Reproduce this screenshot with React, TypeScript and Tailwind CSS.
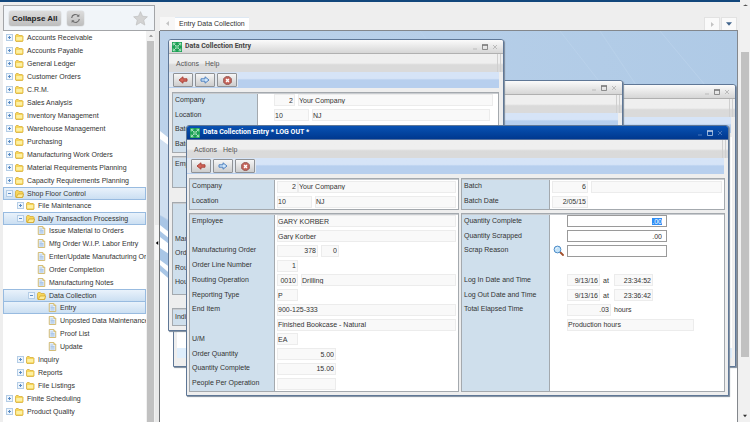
import type React from "react";
import { useEffect, useId, useRef } from "react";
import clsx from "clsx";

type TreeNode = {
  label: string;
  leaf?: boolean;
  selected?: boolean;
  children?: TreeNode[];
};

const MENU: TreeNode[] = [
  { label: "Accounts Receivable" },
  { label: "Accounts Payable" },
  { label: "General Ledger" },
  { label: "Customer Orders" },
  { label: "C.R.M." },
  { label: "Sales Analysis" },
  { label: "Inventory Management" },
  { label: "Warehouse Management" },
  { label: "Purchasing" },
  { label: "Manufacturing Work Orders" },
  { label: "Material Requirements Planning" },
  { label: "Capacity Requirements Planning" },
  {
    label: "Shop Floor Control",
    selected: true,
    children: [
      { label: "File Maintenance" },
      {
        label: "Daily Transaction Processing",
        selected: true,
        children: [
          { label: "Issue Material to Orders", leaf: true },
          { label: "Mfg Order W.I.P. Labor Entry", leaf: true },
          { label: "Enter/Update Manufacturing Orders", leaf: true },
          { label: "Order Completion", leaf: true },
          { label: "Manufacturing Notes", leaf: true },
          {
            label: "Data Collection",
            selected: true,
            children: [
              { label: "Entry", leaf: true, selected: true },
              { label: "Unposted Data Maintenance", leaf: true },
              { label: "Proof List", leaf: true },
              { label: "Update", leaf: true },
            ],
          },
        ],
      },
      { label: "Inquiry" },
      { label: "Reports" },
      { label: "File Listings" },
    ],
  },
  { label: "Finite Scheduling" },
  { label: "Product Quality" },
];

const INDENT = ["pl-[2px]", "pl-[13px]", "pl-[24px]", "pl-[35px]"];

export default function App() {
  return (
    <div className="flex h-screen overflow-hidden bg-[#eeeeee] font-['Liberation_Sans',Arial,sans-serif] text-[7px] leading-[9px] text-[#333]">
      <div className="flex min-w-0 flex-1 flex-col">
        <div className="h-[2px] shrink-0 bg-[#12477c]" />
        <div className="flex min-h-0 flex-1">
          <Sidebar />
          <Splitter />
          <Workspace />
        </div>
      </div>
      <PageScrollbar />
    </div>
  );
}

function Sidebar() {
  return (
    <nav className="flex w-[155px] shrink-0 flex-col pt-[3px] pl-[3px]">
      <div className="flex h-[26px] shrink-0 items-center border border-[#a3a5a8] bg-[#f1f5f9] pr-[6px] pl-[5px]">
        <button className="h-[15px] rounded-[3px] bg-gradient-to-b from-[#dcdcdc] to-[#bdbdbd] px-[3px] text-[8px] leading-[15px] font-bold whitespace-nowrap text-[#222] shadow-[0_0_1px_#888]">
          Collapse All
        </button>
        <button
          aria-label="Refresh"
          className="ml-[6px] flex h-[15px] w-[17px] items-center justify-center rounded-[3px] bg-gradient-to-b from-[#dcdcdc] to-[#bdbdbd] shadow-[0_0_1px_#888]"
        >
          <RefreshIcon />
        </button>
        <button aria-label="Favorites" className="ml-auto">
          <svg viewBox="0 0 24 24" className="size-[15px]">
            <path
              d="M12 1l3.3 7.400 7.700.8-5.800 5.300 1.700 8L12 18.400 5.100 22.500l1.700-8L1 9.200l7.700-.8z"
              fill="#d3d3d3"
              stroke="#bcbcbc"
            />
          </svg>
        </button>
      </div>
      <div className="flex min-h-0 flex-1">
        <div className="min-w-0 flex-1 overflow-hidden bg-white">
          <TreeList nodes={MENU} level={0} />
        </div>
        <div className="flex w-[9px] shrink-0 flex-col items-center bg-[#f1f1f1]">
          <div className="flex h-[10px] items-center">
            <Arrow direction="up" className="w-[4px] text-[#888]" />
          </div>
          <div className="w-[7px] flex-1 bg-[#c1c1c1]" />
        </div>
      </div>
    </nav>
  );
}

function TreeList({ nodes, level }: { nodes: TreeNode[]; level: number }) {
  return (
    <ul className={clsx(level > 0 && "-mt-px")}>
      {nodes.map((node) => (
        <li key={node.label}>
          <div
            className={clsx(
              "flex h-[13px] items-center border whitespace-nowrap",
              INDENT[level],
              node.selected
                ? "border-[#98bbe0] bg-gradient-to-b from-[#e9f2fb] to-[#cbdff2]"
                : "border-transparent",
            )}
          >
            {node.leaf ? (
              <span className="w-[7px] shrink-0" />
            ) : (
              <button aria-label={`Toggle ${node.label}`} className="shrink-0">
                <Expander open={node.children != null} />
              </button>
            )}
            <span className="mr-[3px] ml-[2px] shrink-0">
              {node.leaf ? <PageIcon /> : <FolderIcon open={node.children != null} />}
            </span>
            <a href="#">{node.label}</a>
          </div>
          {node.children && <TreeList nodes={node.children} level={level + 1} />}
        </li>
      ))}
    </ul>
  );
}

function Splitter() {
  return (
    <div className="mt-[29px] flex w-[5px] shrink-0 flex-col border-r border-[#6f7173] bg-[#e9e9e9]">
      <div className="flex-[194]" />
      <div className="flex h-[35px] items-center justify-end bg-[#f6f6f6]">
        <Arrow direction="left" className="w-[4px] text-black" />
      </div>
      <div className="flex-[162]" />
    </div>
  );
}

function Workspace() {
  return (
    <main className="flex min-w-0 flex-1 flex-col pr-[2px]">
      <div className="flex h-[28px] shrink-0 items-end">
        <button
          aria-label="Previous tab"
          className="flex h-[13px] w-[15px] items-center justify-center bg-[#f7f7f7]"
        >
          <Arrow direction="left" className="w-[5px] text-[#c4c4c4]" />
        </button>
        <button className="h-[13px] border-t border-[#dde8f3] bg-white px-[4px] leading-[12px] whitespace-nowrap">
          Entry Data Collection
        </button>
        <div className="mr-[1px] ml-auto flex gap-px">
          <button
            aria-label="Next tab"
            className="flex h-[13px] w-[16px] items-center justify-center border border-b-0 border-[#e2e2e2] bg-[#fafafa]"
          >
            <Arrow direction="right" className="w-[5px] text-[#c4c4c4]" />
          </button>
          <button
            aria-label="Tab list"
            className="flex h-[13px] w-[16px] items-center justify-center border border-b-0 border-[#e2e2e2] bg-[#fafafa]"
          >
            <Arrow direction="down" className="w-[6px] text-[#41648c]" />
          </button>
        </div>
      </div>
      <div className="relative min-h-0 flex-1 overflow-hidden border-t border-r border-[#83878c] bg-white">
        <Wallpaper />
        <InquiryWindow />
        <BatchWindow />
        <EntryWindow />
        <LogOutWindow />
      </div>
    </main>
  );
}

function Window({
  title,
  active,
  className,
  children,
}: {
  title?: string;
  active?: boolean;
  className: string;
  children?: React.ReactNode;
}) {
  return (
    <section
      className={clsx(
        "absolute flex flex-col rounded-t-[3px] border border-[#5f7796] bg-[#eeeeee] shadow-[1px_1px_1px_#7d8b9c]",
        className,
      )}
    >
      <header
        className={clsx(
          "flex h-[14px] shrink-0 items-center rounded-t-[2px] border-b pr-[5px] pl-[3px]",
          active
            ? "border-[#55709c] bg-gradient-to-b from-[#0a52b3] to-[#00388f] text-white"
            : "border-[#b0b0b0] bg-gradient-to-b from-[#fbfbfb] to-[#d6d6d6] text-[#444]",
        )}
      >
        {title && (
          <>
            <AppIcon />
            <h2 className="ml-[3px] font-[Roboto,sans-serif] font-bold whitespace-nowrap">{title}</h2>
          </>
        )}
        <div className="ml-auto flex gap-[4px]">
          <button aria-label="Minimize">
            <svg viewBox="0 0 6 6" className={clsx("size-[6px]", active ? "text-[#4674b8]" : "text-[#bbb]")}>
              <path d="M1 5h4" stroke="currentColor" />
            </svg>
          </button>
          <button aria-label="Maximize">
            <svg viewBox="0 0 6 6" className={clsx("size-[6px]", active ? "text-[#b8cbe6]" : "text-[#777]")}>
              <path d="M.5 1v4.500h5V1" stroke="currentColor" fill="none" strokeWidth=".8" />
              <path d="M0 1h6" stroke="currentColor" strokeWidth="1.600" />
            </svg>
          </button>
          <button aria-label="Close">
            <svg viewBox="0 0 6 6" className={clsx("size-[6px]", active ? "text-[#4674b8]" : "text-[#bbb]")}>
              <path d="M1 1l4 4M5 1L1 5" stroke="currentColor" />
            </svg>
          </button>
        </div>
      </header>
      <div className="flex h-[18px] shrink-0 items-center justify-between bg-gradient-to-b from-[#efefef] from-50% to-[#dadada] to-60% pr-[2px] pl-[7px] text-[#555]">
        {title && (
          <div className="flex gap-[6px] pt-px">
            <button>Actions</button>
            <button>Help</button>
          </div>
        )}
        <div className="ml-auto h-full w-[4px] border-x border-[#cfcfcf]" />
      </div>
      <div className="mr-[4px] flex h-[16px] shrink-0 items-center bg-gradient-to-b from-[#d6e4f7] from-40% to-[#b7cfee] to-50%">
        {title && (
          <div className="flex gap-[2px] bg-[#e2e8ef] pr-px pl-[4px]">
            <ToolButton label="Back">
              <BlockArrow className="fill-[#d4665a] text-[#a8433a]" />
            </ToolButton>
            <ToolButton label="Forward">
              <BlockArrow className="rotate-180 fill-[#cfe6fb] text-[#4a7dbd]" />
            </ToolButton>
            <ToolButton label="Cancel">
              <svg viewBox="0 0 10 10" className="size-[9px]">
                <path d="M3 .8h4L9.200 3v4L7 9.200H3L.8 7V3z" fill="#c8685e" stroke="#8d4a44" />
                <path d="M3.400 3.400l3.200 3.200M6.600 3.400L3.400 6.600" stroke="#fff" strokeWidth="1.500" />
              </svg>
            </ToolButton>
          </div>
        )}
      </div>
      {children}
    </section>
  );
}

function ToolButton({ label, children }: { label: string; children: React.ReactNode }) {
  return (
    <button
      aria-label={label}
      className="flex h-[14px] w-[20px] items-center justify-center rounded-[1px] border border-[#8f9296] bg-gradient-to-b from-[#f6f6f6] to-[#cdcdcd]"
    >
      {children}
    </button>
  );
}

// The label column's width is shared with the rows through --label.
function Panel({
  wide,
  className,
  children,
}: {
  wide?: boolean;
  className?: string;
  children: React.ReactNode;
}) {
  return (
    <div
      className={clsx(
        "grid auto-rows-fr border border-[#a4a9ae] bg-[linear-gradient(to_right,#cfdfec_var(--label),#a4a9ae_var(--label),#a4a9ae_calc(var(--label)+1px),white_calc(var(--label)+1px))] shadow-[inset_0_1px_0_#c9ccd0]",
        wide ? "[--label:87px]" : "[--label:84px]",
        className,
      )}
    >
      {children}
    </div>
  );
}

function Row({
  label,
  inset = "pl-[3px]",
  children,
}: {
  label?: string;
  inset?: string;
  children?: (id: string) => React.ReactNode;
}) {
  const id = useId();
  return (
    <div className="flex min-h-0 items-center overflow-hidden">
      <label
        htmlFor={label && children ? id : undefined}
        className="w-(--label) shrink-0 pb-[2px] pl-[2px] whitespace-nowrap"
      >
        {label}
      </label>
      <div className={clsx("flex min-w-0 flex-1 items-center gap-[3px] pr-[2px]", inset)}>
        {children?.(id)}
      </div>
    </div>
  );
}

function Field({
  id,
  value = "",
  className,
  right,
}: {
  id?: string;
  value?: string;
  className: string;
  right?: boolean;
}) {
  return (
    <input
      id={id}
      aria-label={id ? undefined : "Value"}
      readOnly
      value={value}
      className={clsx(
        "h-[12px] min-w-0 border border-[#ececec] bg-[#f9f9f9]",
        right && "pr-px text-right",
        className,
      )}
    />
  );
}

function EditField({ id, value = "", focused }: { id: string; value?: string; focused?: boolean }) {
  const ref = useRef<HTMLInputElement>(null);

  useEffect(() => {
    if (focused) {
      ref.current?.focus();
      ref.current?.select();
    }
  }, [focused]);

  return (
    <input
      id={id}
      ref={ref}
      defaultValue={value}
      className="h-[12px] w-[100px] border border-[#9a9a9a] bg-white px-[4px] text-right outline-none selection:bg-[#2f8df5] selection:text-white"
    />
  );
}

function EntryWindow() {
  return (
    <Window title="Data Collection Entry" className="top-[8px] left-[8px] h-[292px] w-[336px]">
      <div className="flex flex-col pt-[4px] pr-[4px] pl-[3px]">
        <Panel className="h-[61px]">
          <Row label="Company" inset="pl-[17px]">
            {(id) => (
              <>
                <Field id={id} value="2" right className="w-[21px]" />
                <Field value="Your Company" className="mr-[3px] flex-1" />
              </>
            )}
          </Row>
          <Row label="Location" inset="pl-[17px]">
            {(id) => (
              <>
                <Field id={id} value="10" className="w-[35px]" />
                <Field value="NJ" className="mr-[6px] flex-1" />
              </>
            )}
          </Row>
          <Row label="Batch" />
          <Row label="Batch Date" />
        </Panel>
        <Panel className="mt-[3px] h-[32px]">
          <Row label="Employee" />
          <Row />
        </Panel>
        <Panel className="mt-[14px] h-[93px] pb-[4px]">
          <Row />
          <Row />
          <Row label="Manufacturing Order" />
          <Row label="Order Line Number" />
          <Row label="Routing Operation" />
          <Row label="Hours" />
        </Panel>
        <Panel className="mt-[13px] h-[18px]">
          <Row label="Indirect" />
        </Panel>
      </div>
    </Window>
  );
}

function LogOutWindow() {
  return (
    <Window
      title="Data Collection Entry * LOG OUT *"
      active
      className="top-[94px] left-[26px] h-[271px] w-[543px]"
    >
      <div className="grid min-h-0 flex-1 grid-cols-[270fr_264fr] grid-rows-[32px_1fr] gap-x-[2px] gap-y-[3px] pt-[4px] pr-[3px] pb-[3px] pl-[2px]">
        <Panel>
          <Row label="Company">
            {(id) => (
              <div className="flex flex-1">
                <Field id={id} value="2" right className="w-[21px]" />
                <Field value="Your Company" className="flex-1" />
              </div>
            )}
          </Row>
          <Row label="Location">
            {(id) => (
              <>
                <Field id={id} value="10" className="w-[35px]" />
                <Field value="NJ" className="flex-1" />
              </>
            )}
          </Row>
        </Panel>
        <Panel wide>
          <Row label="Batch">
            {(id) => (
              <>
                <Field id={id} value="6" right className="w-[36px]" />
                <Field className="flex-1" />
              </>
            )}
          </Row>
          <Row label="Batch Date">
            {(id) => <Field id={id} value="2/05/15" right className="w-[36px]" />}
          </Row>
        </Panel>
        <Panel>
          <Row label="Employee">{(id) => <Field id={id} value="GARY KORBER" className="flex-1" />}</Row>
          <Row>{() => <Field value="Gary Korber" className="flex-1" />}</Row>
          <Row label="Manufacturing Order">
            {(id) => (
              <>
                <Field id={id} value="378" right className="w-[41px]" />
                <Field value="0" right className="w-[18px]" />
              </>
            )}
          </Row>
          <Row label="Order Line Number">
            {(id) => <Field id={id} value="1" right className="w-[21px]" />}
          </Row>
          <Row label="Routing Operation">
            {(id) => (
              <>
                <Field id={id} value="0010" right className="w-[21px]" />
                <Field value="Drilling" className="flex-1" />
              </>
            )}
          </Row>
          <Row label="Reporting Type">{(id) => <Field id={id} value="P" className="w-[21px]" />}</Row>
          <Row label="End Item">{(id) => <Field id={id} value="900-125-333" className="flex-1" />}</Row>
          <Row>{() => <Field value="Finished Bookcase - Natural" className="flex-1" />}</Row>
          <Row label="U/M">{(id) => <Field id={id} value="EA" className="w-[21px]" />}</Row>
          <Row label="Order Quantity">
            {(id) => <Field id={id} value="5.00" right className="w-[59px]" />}
          </Row>
          <Row label="Quantity Complete">
            {(id) => <Field id={id} value="15.00" right className="w-[59px]" />}
          </Row>
          <Row label="People Per Operation">{(id) => <Field id={id} className="w-[59px]" />}</Row>
        </Panel>
        <Panel wide>
          <Row label="Quantity Complete" inset="pl-[18px]">
            {(id) => <EditField id={id} value=".00" focused />}
          </Row>
          <Row label="Quantity Scrapped" inset="pl-[18px]">
            {(id) => <EditField id={id} value=".00" />}
          </Row>
          <Row label="Scrap Reason" inset="pl-[4px]">
            {(id) => (
              <>
                <button aria-label="Find scrap reason">
                  <SearchIcon />
                </button>
                <EditField id={id} />
              </>
            )}
          </Row>
          <Row />
          <Row label="Log In Date and Time" inset="pl-[18px]">
            {(id) => (
              <>
                <Field id={id} value="9/13/16" right className="w-[33px]" />
                <span className="w-[8px]">at</span>
                <Field value="23:34:52" right className="w-[39px]" />
              </>
            )}
          </Row>
          <Row label="Log Out Date and Time" inset="pl-[18px]">
            {(id) => (
              <>
                <Field id={id} value="9/13/16" right className="w-[33px]" />
                <span className="w-[8px]">at</span>
                <Field value="23:36:42" right className="w-[39px]" />
              </>
            )}
          </Row>
          <Row label="Total Elapsed Time" inset="pl-[18px]">
            {(id) => (
              <>
                <Field id={id} value=".03" right className="w-[44px]" />
                <span>hours</span>
              </>
            )}
          </Row>
          <Row inset="pl-[18px]">{() => <Field value="Production hours" className="w-[127px]" />}</Row>
          <Row />
          <Row />
          <Row />
          <Row />
        </Panel>
      </div>
    </Window>
  );
}

function BatchWindow() {
  return <Window className="top-[49px] left-[120px] h-[286px] w-[343px]" />;
}

function InquiryWindow() {
  return (
    <Window className="top-[53px] left-[13px] h-[283px] w-[563px]">
      <div className="mx-[3px] mt-[4px] mb-[8px] flex flex-1 flex-col justify-end bg-white">
        <div className="h-[10px] bg-[#dfeefc]" />
      </div>
    </Window>
  );
}

function PageScrollbar() {
  return (
    <div className="flex w-[10px] shrink-0 flex-col items-center bg-[#f1f1f1]">
      <div className="flex h-[52px] pt-[4px]">
        <Arrow direction="up" className="h-[3px] w-[5px] text-[#505050]" />
      </div>
      <div className="w-[8px] flex-[308] bg-[#c1c1c1]" />
      <div className="flex flex-[62] items-end pb-[4px]">
        <Arrow direction="down" className="w-[4px] text-[#333]" />
      </div>
    </div>
  );
}

function Wallpaper() {
  return (
    <svg
      viewBox="0 0 577 391"
      preserveAspectRatio="none"
      aria-hidden="true"
      className="absolute inset-0 size-full"
    >
      <defs>
        <linearGradient id="sky" x1="0" y1="0" x2="1" y2="0">
          <stop offset="0" stopColor="#bcd2ea" />
          <stop offset="1" stopColor="#afcae6" />
        </linearGradient>
      </defs>
      <path d="M0 0h577v320H200L0 245z" fill="url(#sky)" />
      <path d="M0 108l30 22v70L0 184z" fill="#cfdff0" />
      <path d="M0 100l30 24v6L0 108z" fill="#fff" />
      <path d="M0 184l30 28v210L0 391z" fill="#fff" />
      <path d="M0 184l30 22v12L0 194zM0 200l30 24v5L0 206zM0 217l30 20v14L0 229zM0 234l30 26v6L0 240z" fill="#a9c6e6" />
      <path d="M120 0l90 90M260 0l70 90M400 0l70 90M440 0l60 90M500 0l50 60" stroke="#b9d1ea" fill="none" />
    </svg>
  );
}

const ARROW_PATHS = {
  up: "M0 7l5-5 5 5z",
  down: "M0 2h10L5 8z",
  left: "M8 0v10L2 5z",
  right: "M2 0v10l6-5z",
};

function Arrow({
  direction,
  className,
}: {
  direction: keyof typeof ARROW_PATHS;
  className: string;
}) {
  return (
    <svg viewBox="0 0 10 10" className={className} preserveAspectRatio="none">
      <path d={ARROW_PATHS[direction]} fill="currentColor" />
    </svg>
  );
}

function BlockArrow({ className }: { className: string }) {
  return (
    <svg viewBox="0 0 12 10" className={clsx("h-[8px] w-[10px]", className)}>
      <path d="M1 5l5-4v2.500h5v3H6V9z" stroke="currentColor" strokeWidth="1.200" />
    </svg>
  );
}

function Expander({ open }: { open: boolean }) {
  return (
    <svg viewBox="0 0 7 7" className="size-[7px]">
      <rect x=".5" y=".5" width="6" height="6" fill="#eef5fc" stroke="#b4cde6" />
      <path d={open ? "M2 3.500h3" : "M2 3.500h3M3.500 2v3"} stroke="#5b8cc4" />
    </svg>
  );
}

function FolderIcon({ open }: { open: boolean }) {
  return (
    <svg viewBox="0 0 18 16" className="h-[8px] w-[9px]">
      <path d="M1 14V3l1.500-2h4L8 3h6.500L16 4.500V14l-1 1H2z" fill="#f7d65a" stroke="#d3a62c" strokeWidth="1.400" />
      {open ? (
        <path d="M2.500 15L6 8h11.500L14.500 15z" fill="#fdeb95" stroke="#cc9f22" strokeWidth="1.400" />
      ) : (
        <path d="M2.500 6h12v6.500h-12z" fill="#fdf0a4" />
      )}
    </svg>
  );
}

function PageIcon() {
  return (
    <svg viewBox="0 0 18 18" className="size-[9px]">
      <path d="M2.500 1h9l4 4v12h-13z" fill="#e3eefa" stroke="#cdae55" strokeWidth="1.600" />
      <path d="M11.500 1v4h4" fill="#f6d874" stroke="#c2a75a" />
      <path d="M5 6h5M5 9h8M5 11.500h8M5 14h8" stroke="#8fb4e0" strokeWidth="1.300" />
    </svg>
  );
}

function AppIcon() {
  return (
    <svg viewBox="0 0 20 20" className="size-[10px] shrink-0">
      <rect width="20" height="20" fill="#1da155" />
      <path
        d="M3 3l5 5M17 3l-5 5M3 17l5-5M17 17l-5-5M2.500 7V2.500H7M13 2.500h4.500V7M2.500 13v4.500H7M13 17.500h4.500V13"
        stroke="#c9f0d6"
        strokeWidth="1.600"
        fill="none"
      />
      <circle cx="10" cy="10" r="2.500" fill="none" stroke="#c9f0d6" strokeWidth="1.400" />
    </svg>
  );
}

function RefreshIcon() {
  return (
    <svg viewBox="0 0 20 20" className="size-[11px]" fill="none" stroke="#707070" strokeWidth="2.200">
      <path d="M3 9a7 7 0 0 1 12.500-3.500M17 11a7 7 0 0 1-12.500 3.500" />
      <path d="M17 2v5h-5zM3 18v-5h5z" fill="#707070" stroke="none" />
    </svg>
  );
}

function SearchIcon() {
  return (
    <svg viewBox="0 0 22 22" className="size-[11px]">
      <path d="M14 14l6 6" stroke="#a2502c" strokeWidth="3.600" strokeLinecap="round" />
      <circle cx="9" cy="9" r="6.800" fill="#c3e2f8" stroke="#4d8cc8" strokeWidth="2" />
      <path d="M5.500 8.500A4 4 0 0 1 9 5" stroke="#fff" strokeWidth="1.500" fill="none" />
    </svg>
  );
}
